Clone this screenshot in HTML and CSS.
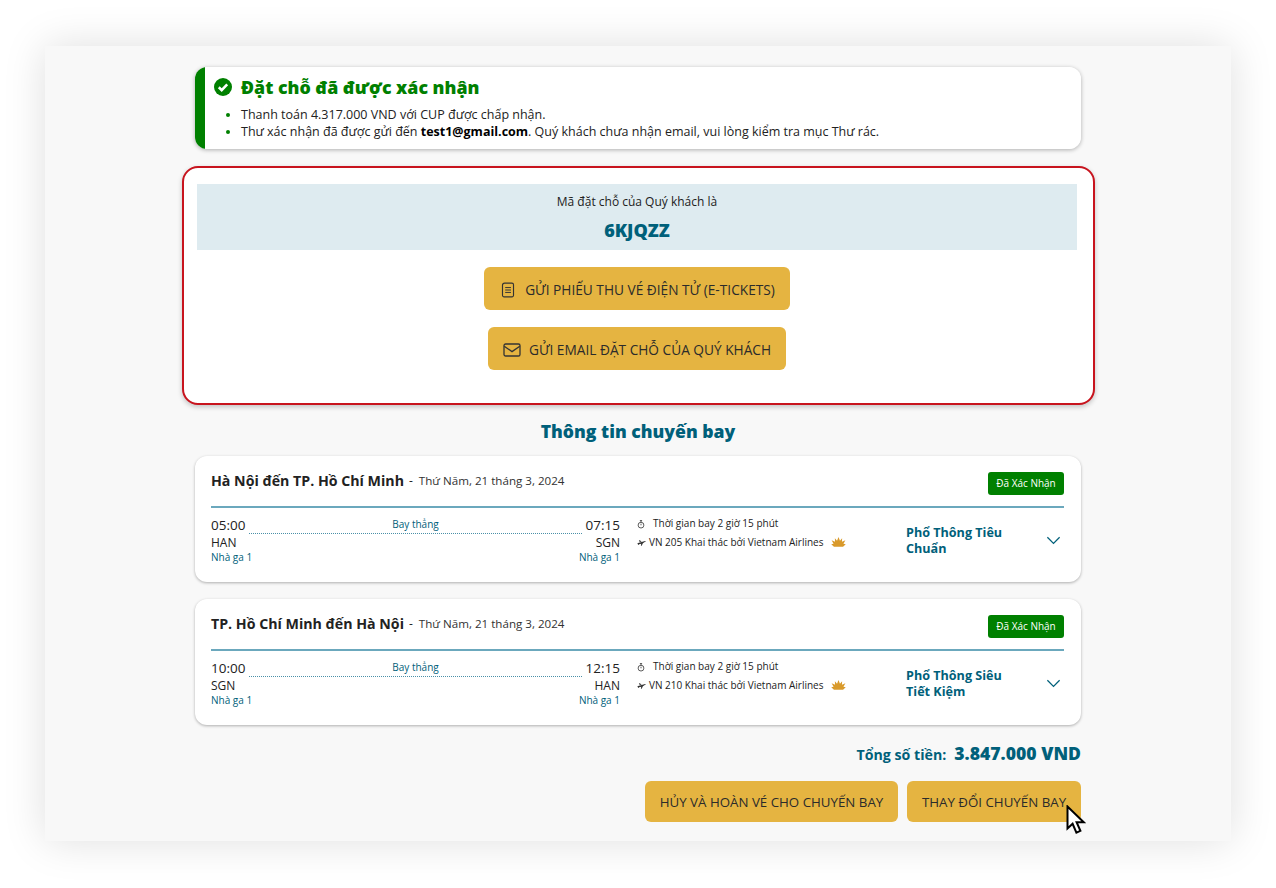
FILE: index.html
```html
<!DOCTYPE html>
<html lang="vi">
<head>
<meta charset="utf-8">
<title>Đặt chỗ đã được xác nhận</title>
<link rel="stylesheet" href="styles.css">
</head>
<body>
<main class="panel">
  <section class="alert">
    <h1 class="alert-title">
      <svg class="alert-icon" viewBox="0 0 18 18"><circle cx="9" cy="9" r="9" fill="#008000"/><path d="M4.8 9.3 7.7 12.1 13.2 6.4" fill="none" stroke="#fff" stroke-width="2.6"/></svg>
      Đặt chỗ đã được xác nhận
    </h1>
    <ul class="alert-list">
      <li>Thanh toán 4.317.000 VND với CUP được chấp nhận.</li>
      <li>Thư xác nhận đã được gửi đến <b>test1@gmail.com</b>. Quý khách chưa nhận email, vui lòng kiểm tra mục Thư rác.</li>
    </ul>
  </section>

  <section class="booking">
    <div class="code-band">
      <div class="code-label">Mã đặt chỗ của Quý khách là</div>
      <div class="code-value">6KJQZZ</div>
    </div>
    <a class="btn btn-ticket">
      <svg class="btn-icon" viewBox="0 0 16 18" fill="none" stroke="#333" stroke-width="1.3"><path d="M4 1.2h8.5a1.8 1.8 0 0 1 1.8 1.8v12a1.8 1.8 0 0 1-1.8 1.8h-9A1.8 1.8 0 0 1 1.7 15V3.5A2.3 2.3 0 0 1 4 1.2Z"/><path d="M4.8 6.2h6.6M4.8 9h6.6M4.8 11.8h6.6" stroke-width="1.1"/></svg>
      GỬI PHIẾU THU VÉ ĐIỆN TỬ (E-TICKETS)
    </a>
    <a class="btn btn-mail">
      <svg class="btn-icon-mail" viewBox="0 0 18 14" fill="none" stroke="#333" stroke-width="1.3"><rect x="1" y="1" width="16" height="12" rx="1.6"/><path d="M1.2 3.2 9 8.6l7.8-5.4"/></svg>
      GỬI EMAIL ĐẶT CHỖ CỦA QUÝ KHÁCH
    </a>
  </section>

  <h2 class="section-title">Thông tin chuyến bay</h2>

  <article class="card">
    <header class="card-head">
      <div class="route"><strong>Hà Nội đến TP. Hồ Chí Minh</strong><span class="dash">-</span><span class="date">Thứ Năm, 21 tháng 3, 2024</span></div>
      <span class="badge">Đã Xác Nhận</span>
    </header>
    <div class="card-body">
      <div class="timeline">
        <div class="times"><span class="time">05:00</span><span class="line"><span class="line-label">Bay thẳng</span></span><span class="time">07:15</span></div>
        <div class="ends"><span>HAN</span><span>SGN</span></div>
        <div class="terms"><span>Nhà ga 1</span><span>Nhà ga 1</span></div>
      </div>
      <div class="info">
        <div class="info-dur">
          <svg class="clock" viewBox="0 0 10 11" fill="none" stroke="#333" stroke-width="1"><circle cx="5" cy="6.3" r="3.6"/><path d="M5 0.6V2.6M3.6 0.6h2.8M5 4.5v2"/></svg>
          <span>Thời gian bay 2 giờ 15 phút</span>
        </div>
        <div class="info-op">
          <svg class="plane" viewBox="0 0 10 8" fill="#333"><path d="M0 4.9 9.2 2.2c.6-.2.9.3.4.7L6.6 4.8 5.2 7.6H4.3L4.7 5.4 2.2 6 1.4 6.9H.8L1.1 5.6Z"/><path d="M3 3.4 2 1.4h.9L5.3 2.8Z"/></svg>
          <span>VN 205 <b class="med">Khai thác bởi</b> Vietnam Airlines</span>
          <svg class="lotus" viewBox="0 0 16 11" fill="#d99a2b"><path d="M8 0 9.6 4 12 1.4 11.8 5.2 15.6 3.6 13.4 7.4 16 8 13 10.6H3L0 8 2.6 7.4 .4 3.6 4.2 5.2 4 1.4 6.4 4Z"/></svg>
        </div>
      </div>
      <div class="fare">Phổ Thông Tiêu Chuẩn</div>
      <svg class="chev" viewBox="0 0 16 10" fill="none" stroke="#00607a" stroke-width="1.4"><path d="M1.2 1.4 8 8.2l6.8-6.8"/></svg>
    </div>
  </article>

  <article class="card card-2">
    <header class="card-head">
      <div class="route"><strong>TP. Hồ Chí Minh đến Hà Nội</strong><span class="dash">-</span><span class="date">Thứ Năm, 21 tháng 3, 2024</span></div>
      <span class="badge">Đã Xác Nhận</span>
    </header>
    <div class="card-body">
      <div class="timeline">
        <div class="times"><span class="time">10:00</span><span class="line"><span class="line-label">Bay thẳng</span></span><span class="time">12:15</span></div>
        <div class="ends"><span>SGN</span><span>HAN</span></div>
        <div class="terms"><span>Nhà ga 1</span><span>Nhà ga 1</span></div>
      </div>
      <div class="info">
        <div class="info-dur">
          <svg class="clock" viewBox="0 0 10 11" fill="none" stroke="#333" stroke-width="1"><circle cx="5" cy="6.3" r="3.6"/><path d="M5 0.6V2.6M3.6 0.6h2.8M5 4.5v2"/></svg>
          <span>Thời gian bay 2 giờ 15 phút</span>
        </div>
        <div class="info-op">
          <svg class="plane" viewBox="0 0 10 8" fill="#333"><path d="M0 4.9 9.2 2.2c.6-.2.9.3.4.7L6.6 4.8 5.2 7.6H4.3L4.7 5.4 2.2 6 1.4 6.9H.8L1.1 5.6Z"/><path d="M3 3.4 2 1.4h.9L5.3 2.8Z"/></svg>
          <span>VN 210 <b class="med">Khai thác bởi</b> Vietnam Airlines</span>
          <svg class="lotus" viewBox="0 0 16 11" fill="#d99a2b"><path d="M8 0 9.6 4 12 1.4 11.8 5.2 15.6 3.6 13.4 7.4 16 8 13 10.6H3L0 8 2.6 7.4 .4 3.6 4.2 5.2 4 1.4 6.4 4Z"/></svg>
        </div>
      </div>
      <div class="fare">Phổ Thông Siêu Tiết Kiệm</div>
      <svg class="chev" viewBox="0 0 16 10" fill="none" stroke="#00607a" stroke-width="1.4"><path d="M1.2 1.4 8 8.2l6.8-6.8"/></svg>
    </div>
  </article>

  <div class="total"><span class="total-label">Tổng số tiền:</span><span class="total-value">3.847.000 VND</span></div>

  <div class="actions">
    <a class="btn btn-action btn-cancel">HỦY VÀ HOÀN VÉ CHO CHUYẾN BAY</a>
    <a class="btn btn-action btn-change">THAY ĐỔI CHUYẾN BAY
      <svg class="cursor" viewBox="0 0 20 30"><path d="M1.5 1.5V23.5L6.6 18.8 10.4 27.6 14.4 25.8 10.6 17.2H17.8Z" fill="#fff" stroke="#000" stroke-width="2" stroke-linejoin="miter"/></svg>
    </a>
  </div>
</main>
</body>
</html>
```
FILE: styles.css
```css
* { box-sizing: border-box; }
html, body { margin: 0; padding: 0; background: #fff; }
body {
  width: 1276px;
  height: 888px;
  overflow: hidden;
  padding: 46px 45px 47px;
  font-family: "Open Sans", "Noto Sans", sans-serif;
  color: #222;
}
.panel {
  width: 1186px;
  height: 795px;
  background: #f8f8f8;
  box-shadow: 0 0 40px rgba(0, 0, 0, 0.13);
  padding: 21px 150px 0;
  display: flex;
  flex-direction: column;
}
.alert {
  height: 82px;
  background: linear-gradient(90deg, #008000 10px, #fff 10px);
  border-radius: 12px;
  box-shadow: 0 1px 4px rgba(0, 0, 0, 0.3);
  padding: 8px 0 0 19px;
}
.alert-title {
  margin: 0;
  display: flex;
  align-items: center;
  gap: 9px;
  font-size: 17.8px;
  line-height: 24px;
  font-weight: 800;
  color: #008000;
}
.alert-icon { width: 18px; height: 18px; flex: none; }
.alert-list {
  margin: 7px 0 0;
  padding: 0 0 0 27px;
  font-size: 12.5px;
  line-height: 17px;
  color: #222;
}
.alert-list li::marker { color: #008000; }
.alert-list b { color: #000; }
.booking {
  width: 913px;
  height: 239px;
  margin: 17px 0 0 -13px;
  background: #fff;
  border: 2px solid #c8141e;
  border-radius: 16px;
  box-shadow: 0 2px 5px rgba(0, 0, 0, 0.22);
  padding: 16px 16px 0 13px;
  display: flex;
  flex-direction: column;
  align-items: center;
}
.code-band {
  width: 100%;
  height: 66px;
  background: #deebf0;
  text-align: center;
  padding-top: 9px;
}
.code-label { font-size: 12px; line-height: 18px; color: #222; }
.code-value {
  margin-top: 7px;
  font-size: 18px;
  line-height: 24px;
  font-weight: 800;
  color: #00607a;
}
.btn {
  display: flex;
  align-items: center;
  justify-content: center;
  background: #e5b441;
  border-radius: 6px;
  color: #2b2b2b;
  font-size: 13.7px;
  line-height: 20px;
  white-space: nowrap;
}
.btn-ticket { width: 306px; height: 43px; margin-top: 17px; gap: 10px; padding: 2px 0 0 2px; }
.btn-mail { width: 298px; height: 43px; margin-top: 17px; gap: 8px; padding-top: 2px; }
.btn-icon { width: 14px; height: 16px; flex: none; }
.btn-icon-mail { width: 18px; height: 14px; flex: none; }
.section-title {
  margin: 14px 0 0;
  height: 24px;
  text-align: center;
  font-size: 17.6px;
  line-height: 24px;
  font-weight: 800;
  color: #00607a;
}
.card {
  height: 126px;
  margin-top: 13px;
  background: #fff;
  border-radius: 12px;
  box-shadow: 0 1px 3px rgba(0, 0, 0, 0.3);
  padding: 16px 17px 0 16px;
}
.card-2 { margin-top: 17px; }
.card-head {
  height: 36px;
  display: flex;
  justify-content: space-between;
  align-items: flex-start;
  border-bottom: 2px solid #6ba8bd;
}
.route { display: flex; align-items: flex-start; height: 20px; }
.route strong { font-size: 14.2px; line-height: 18px; font-weight: 700; color: #222; }
.dash { margin: 0 6px 0 5px; font-size: 12px; line-height: 18px; }
.date { font-size: 11.6px; line-height: 17px; color: #333; }
.badge {
  width: 76px;
  height: 23px;
  background: #008000;
  border-radius: 3px;
  color: #fff;
  font-size: 10px;
  line-height: 23px;
  text-align: center;
}
.card-body { display: flex; align-items: flex-start; padding-top: 8px; }
.timeline { width: 409px; flex: none; }
.times { display: flex; align-items: center; height: 18px; }
.time { font-size: 13.5px; line-height: 18px; color: #222; }
.line {
  flex: 1;
  margin: 0 4px;
  height: 17px;
  padding-top: 1px;
  border-bottom: 1px dotted #4a90a8;
  text-align: center;
  font-size: 10px;
  line-height: 13px;
  color: #00607a;
}
.line-label { display: inline-block; }
.ends {
  display: flex;
  justify-content: space-between;
  font-size: 12px;
  line-height: 17px;
  color: #222;
}
.terms {
  display: flex;
  justify-content: space-between;
  font-size: 10px;
  line-height: 13px;
  color: #00607a;
}
.info {
  width: 269px;
  flex: none;
  margin-left: 17px;
  font-size: 10px;
  color: #222;
}
.info-dur { display: flex; align-items: center; height: 16px; margin-top: -1px; gap: 8px; }
.clock { width: 8px; height: 9px; flex: none; margin-top: 2px; }
.info-op { display: flex; align-items: center; height: 16px; margin-top: 3px; gap: 3px; }
.plane { width: 9px; height: 7px; flex: none; }
.med { font-weight: 500; }
.lotus { width: 15px; height: 10px; flex: none; margin-left: 5px; }
.fare {
  width: 110px;
  flex: none;
  margin-top: 9px;
  font-size: 12.6px;
  line-height: 16px;
  font-weight: 700;
  color: #00607a;
}
.chev { width: 15px; height: 9px; flex: none; margin: 20px 0 0 30px; }
.total {
  display: flex;
  justify-content: flex-end;
  align-items: baseline;
  gap: 8px;
  margin-top: 16px;
  height: 24px;
  color: #00607a;
  font-weight: 700;
}
.total-label { font-size: 14.2px; }
.total-value { font-size: 17.6px; font-weight: 800; }
.actions {
  display: flex;
  justify-content: flex-end;
  gap: 9px;
  margin-top: 16px;
}
.btn-action { height: 41px; font-size: 13.3px; }
.btn-cancel { width: 253px; }
.btn-change { width: 174px; position: relative; }
.cursor { position: absolute; left: 159px; top: 24px; width: 20px; height: 30px; }
```
